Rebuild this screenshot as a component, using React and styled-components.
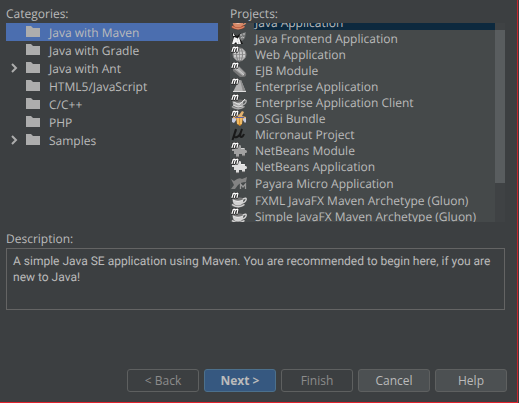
import React from "react";
import styled, { createGlobalStyle, css } from "styled-components";

const Global = createGlobalStyle`
  * { box-sizing: border-box; }
  body { margin: 0; background: #3c3f41; }
`;

const Dialog = styled.main`
  display: flex;
  flex-direction: column;
  min-height: 100vh;
  padding: 6px 10px 10px 6px;
  border-right: 1px solid #c9252d;
  border-bottom: 1px solid #e0242e;
  margin-right: 1px;
  background: #3c3f41;
  color: #bbbbbb;
  font: 12px/16px "Open Sans", "Noto Sans", sans-serif;
  text-rendering: geometricPrecision;
`;
const Columns = styled.div`
  display: grid;
  grid-template-columns: 212fr 275fr;
  gap: 12px;
  padding-right: 2px;
`;
const Panel = styled.section`
  display: flex;
  flex-direction: column;
  min-width: 0;
`;
const Heading = styled.h2`
  margin: 0;
  height: 17px;
  font: inherit;
`;
const Tree = styled.ul`
  list-style: none;
  margin: 0;
  padding: 0;
`;
const TreeRow = styled.li`
  display: flex;
  align-items: center;
  height: 18px;
  color: #bbbbbb;
  background: ${(p) => (p.$selected ? "#4b6eaf" : "transparent")};
`;
const TreeLabel = styled.span`
  line-height: 16px;
  padding-top: 2px;
`;
const Toggle = styled.button`
  display: flex;
  justify-content: center;
  width: 16px;
  padding: 0;
  border: 0;
  background: none;
`;
const TreeIndent = styled.span`
  width: 16px;
`;
const FolderBox = styled.span`
  display: flex;
  width: 27px;
  padding-left: 4px;
`;
const ScrollPane = styled.div`
  display: flex;
  height: 199px;
  overflow: hidden;
  background: #45494a;
`;
const ProjectList = styled.ul`
  flex: 1;
  min-width: 0;
  list-style: none;
  margin: -9px 0 0;
  padding: 0;
`;
const ProjectRow = styled.li`
  display: flex;
  align-items: center;
  height: ${(p) => (p.$tall ? 18 : 16)}px;
  white-space: nowrap;
`;
const IconBox = styled.span`
  display: flex;
  justify-content: center;
  width: 18px;
  margin-right: 6px;
`;
const ProjectName = styled.span`
  flex: 1;
  height: 16px;
  line-height: 18px;
  padding-left: 1px;
  background: ${(p) => (p.$selected ? "#0d293e" : "transparent")};
`;
const ScrollTrack = styled.div`
  width: 10px;
  padding-top: 7px;
  background: #3f4244;
`;
const ScrollThumb = styled.div`
  height: 153px;
  background: #595d5f;
`;
const Description = styled.section`
  margin-top: 9px;
  padding-right: 2px;
`;
const DescriptionText = styled.p`
  margin: 0;
  height: 62px;
  padding: 4px 6px;
  border: 1px solid #646464;
  font-family: Roboto, "Open Sans", sans-serif;
`;
const Actions = styled.footer`
  display: flex;
  justify-content: flex-end;
  gap: 5px;
  margin-top: auto;
`;
const Button = styled.button`
  width: 72px;
  height: 23px;
  padding: 0;
  border: 1px solid #5e6060;
  border-radius: 3px;
  background: #4c5052;
  color: #bbbbbb;
  font: inherit;
  &:disabled {
    background: #3c3f41;
    color: #8c8c8c;
  }
  ${(p) =>
    p.$primary &&
    css`
      background: #365880;
      border-color: #4c708c;
      font-weight: 700;
    `}
`;

const Folder = () => (
  <svg width="14" height="12" viewBox="0 0 14 12" fill="#adadad" aria-hidden="true">
    <path d="M0 0h5l2 2h7v9H0z" />
  </svg>
);
const Chevron = () => (
  <svg width="8" height="10" viewBox="0 0 8 10" fill="none" stroke="#adadad" strokeWidth="2" aria-hidden="true">
    <path d="M2 1l4 4-4 4" />
  </svg>
);

const mavenStroke = "M1 5.500L2.300 1.200M2 2.200q2.600-2 2.200 0L3.300 5.500M4.400 2.200q3-2 2.400 0L6 5.500";
const MavenMark = () => (
  <g fill="none" strokeLinecap="round" strokeLinejoin="round">
    <path d={mavenStroke} stroke="#2a2a2a" strokeWidth="2.600" />
    <path d={mavenStroke} stroke="#fff" strokeWidth="1.200" />
  </g>
);
const Cup = ({ color = "#c2c2c2", dark = "#777" }) => (
  <g>
    <ellipse cx="7" cy="13" rx="6.500" ry="2.500" fill={dark} />
    <path d="M1 12.500q6 4.500 12.500 0" stroke={color} fill="none" strokeWidth="1.300" />
    <path d="M1.500 6.500h11q0 7-5.500 7T1.500 6.500z" fill={color} />
    <ellipse cx="7" cy="7" rx="5" ry="1.800" fill={dark} />
    <path d="M2 8q5 3 10 0" stroke="#fff" strokeOpacity=".5" fill="none" />
    <path d="M12 7q4-2 3 1t-5 3" stroke={color} fill="none" strokeWidth="1.400" />
  </g>
);
const PuzzlePiece = ({ color }) => (
  <g>
    <path d="M1 7h3l1-1h2V4q0-1 1.500-1T10 4v2h4v2q2-.5 2 1.500t-2 1.500v3h-3v-2H8v3H5v-3H3V9H1z" fill={color} />
    <path d="M5 15h3M11 14h3" stroke="#555" />
    <path d="M5 6.500h2M10 6.500h3" stroke="#fff" strokeOpacity=".5" />
  </g>
);

const drawings = {
  java: <Cup color="#d88a68" dark="#a9432b" />,
  duke: (
    <g>
      <path d="M1 3l5 3 4-3-1 5 3 6H1l1-6z" fill="#171717" />
      <path d="M3 7l3 1 2 6H6l-1-2-2 2H1z" fill="#f4f4f4" />
      <path d="M8 7l2 7H8L6 9z" fill="#f4f4f4" />
      <path d="M2 3l2 3H2z" fill="#eee" />
      <path d="M9 4l6-2-1 6-3 3-3-3z" fill="#767878" />
      <path d="M9 5h2M12 4h2M10 8q2-2 3 0" stroke="#c2c2c2" fill="none" />
    </g>
  ),
  web: (
    <g fill="none" stroke="#828282">
      <circle cx="8.500" cy="8.500" r="6.500" fill="#cacaca" />
      <ellipse cx="8.500" cy="8.500" rx="3" ry="6.500" />
      <path d="M8.500 2v13M2 8.500h13M4 5h9M4 12h9" strokeWidth=".7" />
    </g>
  ),
  ejb: (
    <g>
      <path d="M2 6q2-4 6-2l7 7q1 4-3 4H9L2 9z" fill="#777" />
      <path d="M3 5q2-2 5 0l6 6-2 3-9-7z" fill="#a9a9a9" />
      <path d="M4 5l9 8" stroke="#d2d2d2" />
    </g>
  ),
  ear: (
    <g>
      <path d="M8 2h2l5 12H2z" fill="#b2b2b2" />
      <path d="M9 2h1l5 12h-3z" fill="#8c8c8c" />
      <path d="M2 13.500h13" stroke="#dedede" />
    </g>
  ),
  client: (
    <g>
      <Cup color="#aaa" dark="#686868" />
      <path d="M3 8l5 3 6-6M2 11l5 2 5-1" stroke="#ddd" fill="none" />
    </g>
  ),
  osgi: (
    <g>
      <path d="M7 1l1 4 3-4 2 1-2 4 4 1v2H2V6z" fill="#e5b26e" />
      <path d="M1 8l5 1-3 4-2-1zM15 8l-4 1 3 4 1-1z" fill="#c4c9e0" />
      <path d="M5 7h7l-1 7-2 2-3-2z" fill="#dd932f" />
      <path d="M7 8v6M10 8v6" stroke="#ffe3a0" />
      <path d="M4 7.500h9" stroke="#6464a0" />
    </g>
  ),
  micronaut: (
    <path d="M5 3L1.500 14M5 4q-4 9 1 7 3-1 5-8-3 8-1 8 2 0 3-3" fill="none" stroke="#191919" strokeWidth="2" />
  ),
  module: <PuzzlePiece color="#a1a1a1" />,
  application: <PuzzlePiece color="#dedede" />,
  payara: (
    <g>
      <path d="M0 4l3 2q5-4 8-2l5-2-1 5q-5 0-8 3l-3 4H0l3-4z" fill="#838383" />
      <path d="M9.500 14V9l2.500 3 2.500-3v5" stroke="#999" strokeWidth="1.300" fill="none" />
    </g>
  ),
  cup: <Cup color="#d2d2d2" dark="#777" />,
};

const ProjectIcon = ({ name, maven }) => (
  <svg width="16" height="16" viewBox="0 0 16 16" aria-hidden="true">
    {drawings[name]}
    {maven && <MavenMark />}
  </svg>
);

const categories = [
  { name: "Java with Maven", selected: true },
  { name: "Java with Gradle" },
  { name: "Java with Ant", expandable: true },
  { name: "HTML5/JavaScript" },
  { name: "C/C++" },
  { name: "PHP" },
  { name: "Samples", expandable: true },
];
const projects = [
  { name: "Java Application", icon: "java", selected: true },
  { name: "Java Frontend Application", icon: "duke" },
  { name: "Web Application", icon: "web", maven: true },
  { name: "EJB Module", icon: "ejb", maven: true },
  { name: "Enterprise Application", icon: "ear", maven: true },
  { name: "Enterprise Application Client", icon: "client", maven: true },
  { name: "OSGi Bundle", icon: "osgi", maven: true },
  { name: "Micronaut Project", icon: "micronaut" },
  { name: "NetBeans Module", icon: "module", maven: true },
  { name: "NetBeans Application", icon: "application", maven: true },
  { name: "Payara Micro Application", icon: "payara", tall: true },
  { name: "FXML JavaFX Maven Archetype (Gluon)", icon: "cup", maven: true },
  { name: "Simple JavaFX Maven Archetype (Gluon)", icon: "cup", maven: true },
];

export default function App() {
  return (
    <Dialog>
      <Global />
      <Columns>
        <Panel>
          <Heading id="categories">Categories:</Heading>
          <Tree role="tree" aria-labelledby="categories">
            {categories.map((c) => (
              <TreeRow key={c.name} role="treeitem" aria-selected={!!c.selected} $selected={c.selected}>
                {c.expandable ? (
                  <Toggle type="button" aria-label={`Expand ${c.name}`}>
                    <Chevron />
                  </Toggle>
                ) : (
                  <TreeIndent />
                )}
                <FolderBox>
                  <Folder />
                </FolderBox>
                <TreeLabel>{c.name}</TreeLabel>
              </TreeRow>
            ))}
          </Tree>
        </Panel>
        <Panel>
          <Heading id="projects">Projects:</Heading>
          <ScrollPane>
            <ProjectList role="listbox" aria-labelledby="projects">
              {projects.map((p) => (
                <ProjectRow key={p.name} role="option" aria-selected={!!p.selected} $tall={p.tall}>
                  <IconBox>
                    <ProjectIcon name={p.icon} maven={p.maven} />
                  </IconBox>
                  <ProjectName $selected={p.selected}>{p.name}</ProjectName>
                </ProjectRow>
              ))}
            </ProjectList>
            <ScrollTrack>
              <ScrollThumb />
            </ScrollTrack>
          </ScrollPane>
        </Panel>
      </Columns>
      <Description>
        <Heading>Description:</Heading>
        <DescriptionText>
          A simple Java SE application using Maven. You are recommended to begin here, if you are new to Java!
        </DescriptionText>
      </Description>
      <Actions>
        <Button type="button" disabled>&lt; Back</Button>
        <Button type="button" $primary>Next &gt;</Button>
        <Button type="button" disabled>Finish</Button>
        <Button type="button">Cancel</Button>
        <Button type="button">Help</Button>
      </Actions>
    </Dialog>
  );
}
